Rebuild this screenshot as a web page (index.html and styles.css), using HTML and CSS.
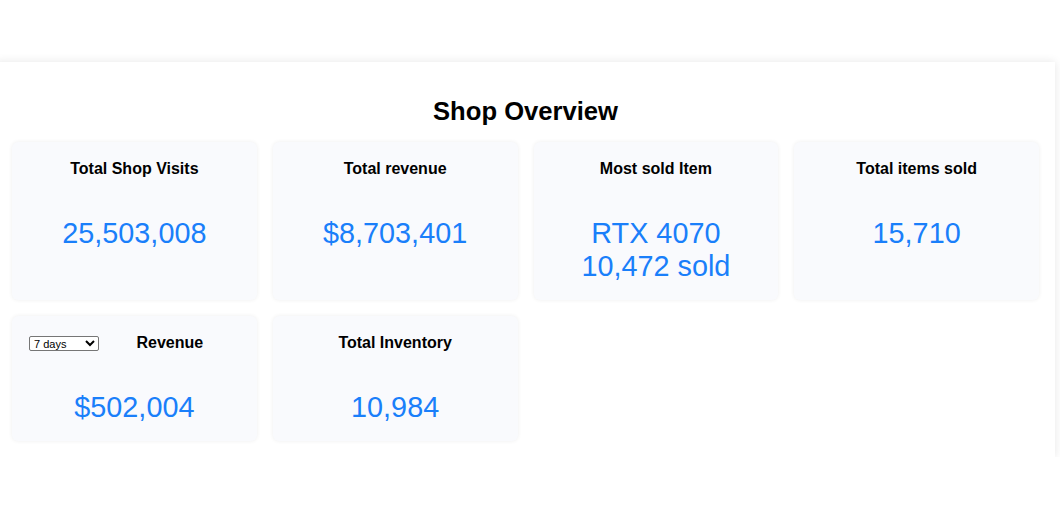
FILE: index.html
```html
<!DOCTYPE html>
<html lang="en">
<head>
<meta charset="utf-8">
<title>Shop Overview</title>
<link rel="stylesheet" href="styles.css">
</head>
<body>
<section class="overview">
  <h2 class="overview-title">Shop Overview</h2>
  <div class="grid">
    <div class="card">
      <h3 class="card-title">Total Shop Visits</h3>
      <div class="card-value">25,503,008</div>
    </div>
    <div class="card">
      <h3 class="card-title">Total revenue</h3>
      <div class="card-value">$8,703,401</div>
    </div>
    <div class="card">
      <h3 class="card-title">Most sold Item</h3>
      <div class="card-value">RTX 4070<br>10,472 sold</div>
    </div>
    <div class="card">
      <h3 class="card-title">Total items sold</h3>
      <div class="card-value">15,710</div>
    </div>
    <div class="card">
      <div class="card-head">
        <select class="range">
          <option>7 days</option>
          <option>30 days</option>
          <option>90 days</option>
        </select>
        <h3 class="card-title grow">Revenue</h3>
      </div>
      <div class="card-value">$502,004</div>
    </div>
    <div class="card">
      <h3 class="card-title">Total Inventory</h3>
      <div class="card-value">10,984</div>
    </div>
  </div>
</section>
</body>
</html>
```
FILE: styles.css
```css
html, body {
  margin: 0;
  padding: 0;
  background: #ffffff;
  font-family: "Liberation Sans", Arial, sans-serif;
  color: #000;
}

.overview {
  margin: 62px 5px 0 -4px;
  padding: 16px;
  background: #fff;
  box-shadow: 0 0 9px rgba(0, 0, 0, 0.1);
}

.overview-title {
  margin: 18px 0 16px;
  font-size: 25.6px;
  font-weight: bold;
  text-align: center;
  line-height: 30px;
}

.grid {
  display: grid;
  grid-template-columns: repeat(4, 1fr);
  gap: 16px;
}

.card {
  background: #f9fafd;
  border-radius: 6px;
  box-shadow: 0 0 4px rgba(0, 0, 0, 0.07);
  padding: 18px 16px 17px;
  text-align: center;
}

.card-title {
  margin: 0;
  font-size: 16px;
  font-weight: bold;
  line-height: 18px;
}

.card-head {
  display: flex;
  align-items: center;
}

.grow {
  flex: 1;
}

.range {
  width: 70px;
  height: 15px;
  margin-left: 1px;
  padding: 0;
  font-family: "Liberation Sans", Arial, sans-serif;
  font-size: 11px;
  border: 1px solid #767676;
  border-radius: 2px;
  background: #fff;
  color: #000;
}

.card-value {
  margin-top: 39px;
  font-size: 28.8px;
  line-height: 33px;
  color: #1a7ffa;
}
```
